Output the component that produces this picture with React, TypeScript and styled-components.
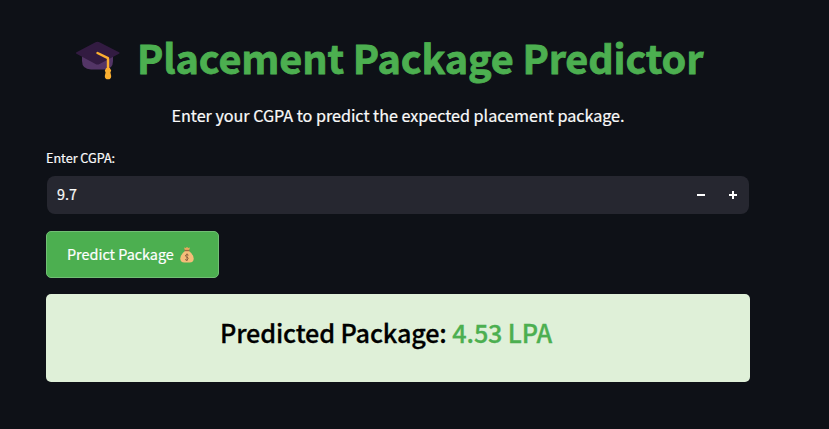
import React from "react";
import styled, { createGlobalStyle } from "styled-components";

const GlobalStyle = createGlobalStyle`
  * { box-sizing: border-box; }
  html, body { margin: 0; background: #0e1117; overflow: hidden; }
  body, button, input { font-family: "Noto Sans CJK SC", "Noto Sans", sans-serif; }
`;

const Page = styled.main`
  width: 704px;
  height: 429px;
  margin-left: 46px;
  color: #fafafa;
  display: flex;
  flex-direction: column;
`;

const Title = styled.h1`
  display: flex;
  align-items: flex-start;
  margin: 30px 0 0 29px;
  height: 56px;
  font-size: 39.6px;
  line-height: 53px;
  font-weight: 700;
  letter-spacing: -0.13px;
  color: #4caf50;
  -webkit-text-stroke: 0.8px #4caf50;
  white-space: nowrap;
`;

const CapIcon = styled.svg`
  width: 46px;
  height: 46px;
  margin: 5px 16px 0 0;
  flex: none;
`;

const Subtitle = styled.p`
  margin: 16px 0 0 125.500px;
  height: 27px;
  font-size: 16.2px;
  line-height: 27px;
  letter-spacing: -0.035px;
  -webkit-text-stroke: 0.2px #fafafa;
  white-space: nowrap;
`;

const Label = styled.label`
  margin-top: 19px;
  height: 20px;
  font-size: 12.6px;
  line-height: 20px;
  -webkit-text-stroke: 0.2px #fafafa;
`;

const NumberField = styled.div`
  display: flex;
  align-items: center;
  width: 702px;
  height: 38px;
  margin: 8px 0 0 1px;
  border-radius: 8px;
  background: #262730;
  overflow: hidden;
`;

const NumberInput = styled.input`
  flex: 1;
  min-width: 0;
  height: 38px;
  padding: 0 10px 3px;
  border: 0;
  outline: 0;
  background: transparent;
  color: #fafafa;
  font-size: 14.4px;
  -webkit-text-stroke: 0.2px #fafafa;
`;

const StepButton = styled.button`
  display: flex;
  align-items: center;
  justify-content: center;
  width: 32px;
  height: 38px;
  padding: 0;
  border: 0;
  background: transparent;
  color: #ffffff;
`;

const PredictButton = styled.button`
  display: flex;
  align-items: center;
  width: 173px;
  height: 47px;
  margin-top: 17px;
  padding: 0 20px 2px;
  border: 1px solid #71bf74;
  border-radius: 5px;
  background: #4caf50;
  color: #ffffff;
  font-size: 14.4px;
  line-height: 24px;
  -webkit-text-stroke: 0.2px #ffffff;
  white-space: nowrap;
`;

const BagIcon = styled.svg`
  width: 16px;
  height: 18px;
  margin: 2px 0 0 5px;
  flex: none;
`;

const ResultCard = styled.section`
  height: 88px;
  margin-top: 16px;
  padding: 21px 0 0 174px;
  border-radius: 5px;
  background: #dff0d8;
`;

const ResultText = styled.h3`
  margin: 0;
  font-size: 25.2px;
  line-height: 34px;
  font-weight: 500;
  letter-spacing: -0.13px;
  color: #000000;
  -webkit-text-stroke: 0.3px currentColor;
  white-space: nowrap;
`;

const Amount = styled.span`
  color: #4caf50;
  -webkit-text-stroke-color: #4caf50;
`;

export default function App() {
  return (
    <>
      <GlobalStyle />
      <Page>
        <Title>
          <CapIcon viewBox="0 0 46 46" aria-hidden="true">
            <path d="M7 18h31v8q0 8.500-9 8.500H16q-9-.5-9-8.500z" fill="#533566" />
            <path d="M20.500 7.300q2-.9 4 0L44 17.300q1.500.7 0 1.500L24.500 29q-2 1-4 0L1.500 18.800q-1.500-.8 0-1.500z" fill="#321b41" />
            <path d="M22.500 18L33 23.200V36" fill="none" stroke="#fbaf30" strokeWidth="2.400" strokeLinecap="round" strokeLinejoin="round" />
            <path d="M31.200 33h3.600l1.400 2.600-.8 2 .8 3.300q0 3.400-3.200 3.400t-3.200-3.400l.8-3.300-.8-2z" fill="#fbaf30" />
          </CapIcon>
          Placement Package Predictor
        </Title>
        <Subtitle>Enter your CGPA to predict the expected placement package.</Subtitle>
        <Label htmlFor="cgpa">Enter CGPA:</Label>
        <NumberField>
          <NumberInput id="cgpa" defaultValue="9.7" />
          <StepButton aria-label="Decrease">
            <svg width="8" height="8" viewBox="0 0 8 8"><path d="M0 3h8v2H0z" fill="currentColor" /></svg>
          </StepButton>
          <StepButton aria-label="Increase">
            <svg width="8" height="8" viewBox="0 0 8 8"><path d="M0 3h3V0h2v3h3v2H5v3H3V5H0z" fill="currentColor" /></svg>
          </StepButton>
        </NumberField>
        <PredictButton>
          Predict Package
          <BagIcon viewBox="0 0 16 18" aria-hidden="true">
            <path d="M5 1.400l1.600.7L8 1l1.400 1.100 1.600-.7L10 4.500H6z" fill="#e9a85e" />
            <path d="M6 5h4q4.700 3.500 4.700 7.500t-4 4H5.300q-4 0-4-4T6 5z" fill="#f5bd79" />
            <path d="M5.600 3.900h4.800v1.300H5.600z" fill="#a1683f" />
            <path d="M9.500 9.200Q8 7.900 6.800 9t.8 2 1.600 1.400-1 1.600-2.200-.7M8 7.500V15" fill="none" stroke="#805337" strokeWidth=".8" />
          </BagIcon>
        </PredictButton>
        <ResultCard>
          <ResultText>
            Predicted Package: <Amount>4.53 LPA</Amount>
          </ResultText>
        </ResultCard>
      </Page>
    </>
  );
}
